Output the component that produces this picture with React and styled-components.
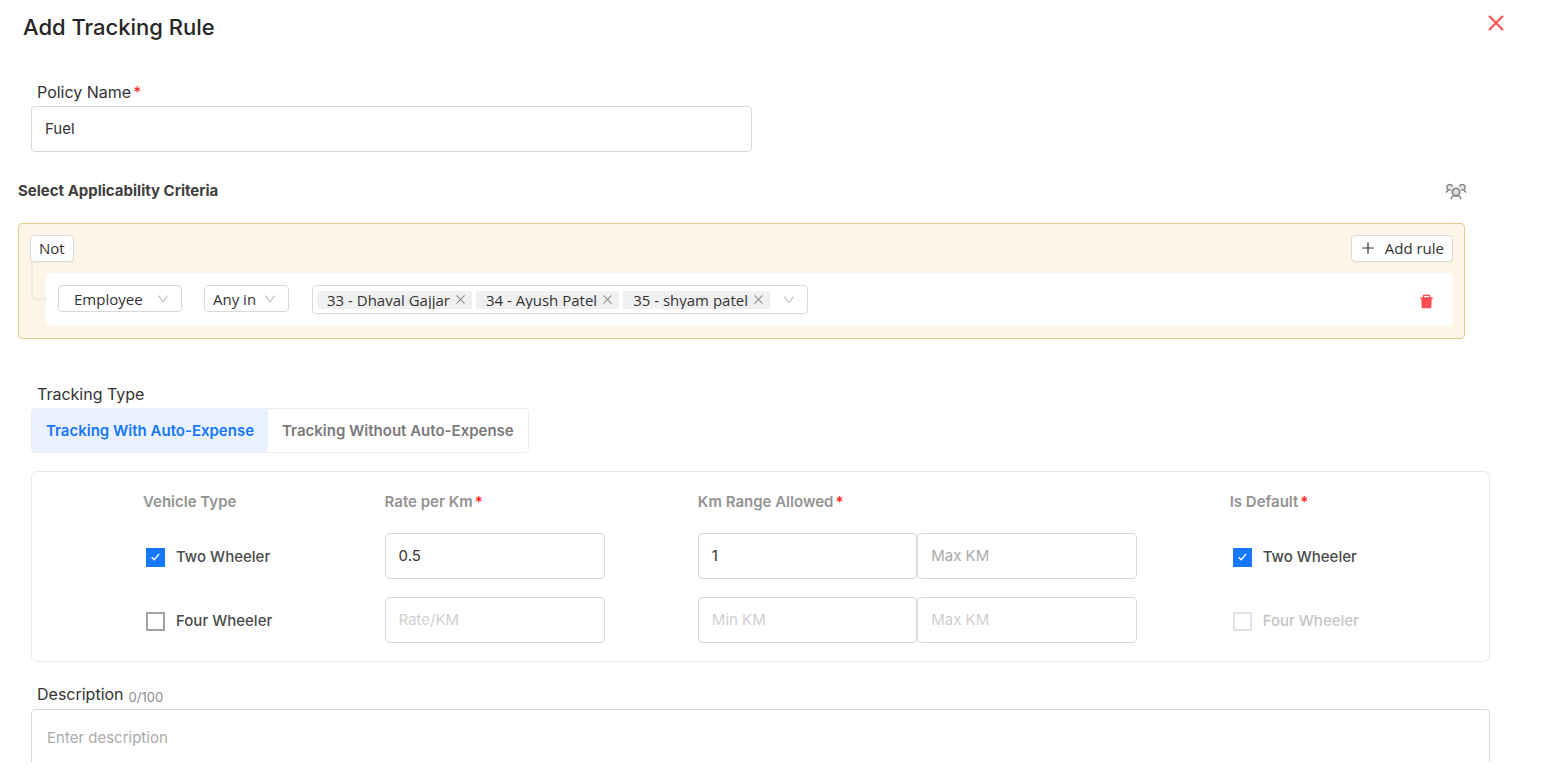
import React, { useState } from "react";
import styled, { createGlobalStyle } from "styled-components";
import {
  AiFillDelete,
  AiOutlineClose,
  AiOutlineDown,
  AiOutlinePlus,
} from "react-icons/ai";

const GlobalStyle = createGlobalStyle`
  *,
  *::before,
  *::after {
    box-sizing: border-box;
  }

  body {
    margin: 0;
    background-color: #fff;
    color: #333;
    font-family: Inter, "Liberation Sans", sans-serif;
    font-size: 16px;
    line-height: 24px;
  }

  button,
  input,
  select,
  textarea {
    font-family: inherit;
    font-size: inherit;
    line-height: inherit;
    color: inherit;
  }
`;

const Drawer = styled.main`
  display: flex;
  flex-direction: column;
  height: 100vh;
  padding-bottom: 9px;
`;

const Header = styled.header`
  display: flex;
  justify-content: space-between;
  align-items: flex-start;
  padding: 12px 37px 0 23px;
`;

const Title = styled.h1`
  margin: 0;
  font-size: 22px;
  font-weight: 500;
  line-height: 30px;
  color: #262626;
`;

const IconButton = styled.button`
  display: flex;
  padding: 0;
  border: none;
  background: none;
  color: ${({ $color }) => $color};
  font-size: ${({ $size }) => $size}px;
  cursor: pointer;
`;

const CloseButton = styled(IconButton)`
  svg {
    stroke: currentColor;
    stroke-width: 24;
  }
`;

const Content = styled.form`
  flex: 1;
  min-height: 0;
  padding: 38px 54px 0 31px;
  overflow: hidden;
`;

const Label = styled.label`
  display: block;
  margin-bottom: 2px;
  padding-left: 6px;
  font-size: 16px;
`;

const Required = styled.span`
  margin-left: 2px;
  color: #ff1f1f;
`;

const Counter = styled.small`
  position: relative;
  top: 2px;
  margin-left: 5px;
  font-size: 13px;
  color: #8c8c8c;
`;

const TextInput = styled.input`
  display: block;
  width: 100%;
  height: 46px;
  padding: 0 13px 2px;
  border: 1px solid #d9d9d9;
  border-radius: 4px;
  background-color: #fff;
  font-size: 15px;

  &::placeholder {
    color: ${({ disabled }) => (disabled ? "#d0d0d0" : "#ababab")};
    opacity: 1;
  }
`;

const Half = styled.div`
  display: grid;
  grid-template-columns: 1fr 1fr;
  column-gap: 18px;
`;

const Criteria = styled.section`
  margin: 26px -29px 43px -13px;
  padding-right: 54px;
`;

const CriteriaHead = styled.div`
  display: flex;
  justify-content: space-between;
  align-items: center;
  margin: 0 -2px 20px 0;
  padding-top: 1px;
`;

const CriteriaTitle = styled.h2`
  margin: 0;
  font-size: 15px;
  font-weight: 700;
  line-height: 24px;
  color: #404040;
`;

const RuleGroup = styled.div`
  padding: 11px 11px 12px;
  border: 1px solid #e0cc8f;
  border-radius: 4px;
  background-color: #fdf6e8;
  font-family: "Open Sans", "Noto Sans", sans-serif;
  font-size: 15px;
`;

const RuleGroupHead = styled.div`
  display: flex;
  justify-content: space-between;
`;

const SmallButton = styled.button`
  display: flex;
  align-items: center;
  gap: 9px;
  height: 27px;
  padding: 0 8px 1px;
  border: 1px solid #d9d9d9;
  border-radius: 4px;
  background-color: #fff;
  box-shadow: 0 1px 1px #0000000a;
  cursor: pointer;
`;

const RuleGroupBody = styled.div`
  display: flex;
  padding-left: 1px;
`;

const Connector = styled.div`
  flex: none;
  width: 15px;
  height: 38px;
  border: solid #efe9dc;
  border-width: 0 0 2px 2px;
  border-bottom-left-radius: 4px;
`;

const Rule = styled.div`
  flex: 1;
  display: flex;
  align-items: flex-start;
  margin-top: 11px;
  height: 53px;
  padding: 12px 18px 0 12px;
  border-radius: 5px;
  background-color: #fff;
`;

const SelectBox = styled.div`
  display: grid;
  align-items: center;
  margin-right: ${({ $gap }) => $gap}px;

  & > * {
    grid-area: 1 / 1;
  }
`;

const Select = styled.select`
  appearance: none;
  width: ${({ $width }) => $width}px;
  height: 27px;
  padding: 0 ${({ $pad }) => $pad}px;
  border: 1px solid #d9d9d9;
  border-radius: 4px;
  background-color: #fff;
`;

const Arrow = styled(AiOutlineDown)`
  justify-self: end;
  margin-right: ${({ $right }) => $right || 0}px;
  font-size: 14px;
  color: #bfbfbf;
  pointer-events: none;
`;

const TagBox = styled.div`
  display: flex;
  align-items: center;
  gap: 4px;
  height: 29px;
  padding: 0 11px 0 4px;
  border: 1px solid #d9d9d9;
  border-radius: 4px;
`;

const Tag = styled.span`
  display: flex;
  align-items: center;
  gap: 4px;
  height: 18px;
  padding: 0 5px 0 10px;
  border-radius: 2px;
  background-color: #f0f0f0;
  line-height: 18px;
  overflow: hidden;
`;

const TagArrow = styled(Arrow)`
  margin-left: 8px;
`;

const DeleteButton = styled(IconButton)`
  margin: 8px 0 0 auto;
`;

const Tabs = styled.div`
  display: inline-flex;
  height: 45px;
  margin-bottom: 18px;
  border: 1px solid #ededed;
  border-radius: 4px;
  overflow: hidden;
  vertical-align: top;
`;

const Tab = styled.button`
  padding: 0 14px;
  border: none;
  background-color: ${({ $active }) => ($active ? "#ebf2ff" : "#fff")};
  color: ${({ $active }) => ($active ? "#1677ff" : "#7a7a7a")};
  font-size: 15px;
  font-weight: 600;
  cursor: pointer;
`;

const TableBox = styled.div`
  margin-bottom: 20px;
  border: 1px solid #e8e8ec;
  border-radius: 6px;
`;

const Table = styled.table`
  width: 100%;
  border-spacing: 0;
  table-layout: fixed;
  font-size: 15px;
`;

const Th = styled.th`
  width: ${({ $width }) => $width};
  padding: 18px 0 19px ${({ $indent }) => $indent || 0}px;
  text-align: left;
  font-weight: 600;
  color: #949494;
`;

const Td = styled.td`
  padding: 0 ${({ $right }) => $right || 0}px 18px
    ${({ $indent }) => $indent || 0}px;
`;

const Range = styled.div`
  display: grid;
  grid-template-columns: 1fr 1fr;
`;

const CheckLabel = styled.label`
  display: flex;
  align-items: center;
  gap: 11px;
  padding: 2px 0 0 3px;
  font-weight: 500;
  color: ${({ $disabled }) => ($disabled ? "#c4c4c4" : "#4a4a4a")};
`;

const CheckBox = styled.span`
  display: grid;
  place-items: center;

  & > * {
    grid-area: 1 / 1;
  }
`;

const CheckInput = styled.input`
  appearance: none;
  width: 19px;
  height: 19px;
  margin: 0;
  border: 2px solid #a3a3a3;
  background-color: #fff;

  &:checked {
    border-color: #1677ff;
    background-color: #1677ff;
  }

  &:disabled {
    border-color: #e2e2e2;
  }
`;

const TextArea = styled.textarea`
  display: block;
  width: 100%;
  height: 100px;
  padding: 16px 15px;
  border: 1px solid #d9d9d9;
  border-radius: 4px;
  font-size: 15px;
  resize: none;

  &::placeholder {
    color: #ababab;
    opacity: 1;
  }
`;

const TeamIcon = () => (
  <svg width="22" height="17" viewBox="0 0 22 17" fill="none" stroke="#7d7d7d">
    <path
      d="M7.6 3.8a2.9 2.9 0 1 0-4.3 3.1h2.9M3.3 6.9L.8 9.6"
      fill="#e4e4e4"
      strokeWidth="1.4"
    />
    <path
      d="M14.4 3.8a2.9 2.9 0 1 1 4.3 3.1h-2.9M18.7 6.9l2.5 2.7"
      fill="#e4e4e4"
      strokeWidth="1.4"
    />
    <circle cx="11" cy="9" r="3.7" fill="#dedede" strokeWidth="1.5" />
    <path
      d="M5.8 16.2c.4-1.9 1.5-3 3-3.5h4.4c1.5.5 2.6 1.6 3 3.5"
      strokeWidth="1.4"
    />
  </svg>
);

const Checkbox = ({ label, checked, disabled, onChange }) => (
  <CheckLabel $disabled={disabled}>
    <CheckBox>
      <CheckInput
        type="checkbox"
        checked={checked}
        disabled={disabled}
        onChange={onChange}
      />
      {checked && (
        <svg width="9" height="8" viewBox="0 0 9 8" fill="none">
          <path d="M.7 4.2l2.5 2.5L8.2.9" stroke="#fff" strokeWidth="1.4" />
        </svg>
      )}
    </CheckBox>
    {label}
  </CheckLabel>
);

const employees = ["33 - Dhaval Gajjar", "34 - Ayush Patel", "35 - shyam patel"];

const trackingTypes = [
  "Tracking With Auto-Expense",
  "Tracking Without Auto-Expense",
];

const vehicles = [
  { name: "Two Wheeler", enabled: true, rate: "0.5", min: "1" },
  { name: "Four Wheeler", enabled: false, rate: "", min: "" },
];

const App = () => {
  const [type, setType] = useState(trackingTypes[0]);
  const [rows, setRows] = useState(vehicles);
  const [defaultVehicle, setDefaultVehicle] = useState("Two Wheeler");
  const [description, setDescription] = useState("");

  const toggleRow = (name) =>
    setRows(
      rows.map((row) =>
        row.name === name ? { ...row, enabled: !row.enabled } : row
      )
    );

  return (
    <>
      <GlobalStyle />
      <Drawer>
        <Header>
          <Title>Add Tracking Rule</Title>
          <CloseButton type="button" aria-label="Close" $color="#ff4d4f" $size={22}>
            <AiOutlineClose />
          </CloseButton>
        </Header>

        <Content>
          <Half>
            <div>
              <Label htmlFor="policy">
                Policy Name<Required>*</Required>
              </Label>
              <TextInput id="policy" defaultValue="Fuel" />
            </div>
          </Half>

          <Criteria>
            <CriteriaHead>
              <CriteriaTitle>Select Applicability Criteria</CriteriaTitle>
              <IconButton type="button" aria-label="Show employees">
                <TeamIcon />
              </IconButton>
            </CriteriaHead>

            <RuleGroup>
              <RuleGroupHead>
                <SmallButton type="button">Not</SmallButton>
                <SmallButton type="button">
                  <AiOutlinePlus size={16} />
                  Add rule
                </SmallButton>
              </RuleGroupHead>
              <RuleGroupBody>
                <Connector />
                <Rule>
                  <SelectBox $gap={22}>
                    <Select aria-label="Field" $width={124} $pad={15}>
                      <option>Employee</option>
                    </Select>
                    <Arrow $right={12} />
                  </SelectBox>
                  <SelectBox $gap={23}>
                    <Select aria-label="Operator" $width={85} $pad={8}>
                      <option>Any in</option>
                    </Select>
                    <Arrow $right={12} />
                  </SelectBox>
                  <TagBox>
                    {employees.map((employee) => (
                      <Tag key={employee}>
                        {employee}
                        <IconButton
                          type="button"
                          aria-label={`Remove ${employee}`}
                          $color="#8c8c8c"
                          $size={13}
                        >
                          <AiOutlineClose />
                        </IconButton>
                      </Tag>
                    ))}
                    <TagArrow />
                  </TagBox>
                  <DeleteButton
                    type="button"
                    aria-label="Delete rule"
                    $color="#ff4d4f"
                    $size={17}
                  >
                    <AiFillDelete />
                  </DeleteButton>
                </Rule>
              </RuleGroupBody>
            </RuleGroup>
          </Criteria>

          <Label as="div">Tracking Type</Label>
          <Tabs>
            {trackingTypes.map((item) => (
              <Tab
                key={item}
                type="button"
                $active={item === type}
                onClick={() => setType(item)}
              >
                {item}
              </Tab>
            ))}
          </Tabs>

          <TableBox>
            <Table>
              <thead>
                <tr>
                  <Th $width="24.2%" $indent={111}>
                    Vehicle Type
                  </Th>
                  <Th $width="21.5%">
                    Rate per Km<Required>*</Required>
                  </Th>
                  <Th $width="36.5%">
                    Km Range Allowed<Required>*</Required>
                  </Th>
                  <Th>
                    Is Default<Required>*</Required>
                  </Th>
                </tr>
              </thead>
              <tbody>
                {rows.map(({ name, enabled, rate, min }) => (
                  <tr key={name}>
                    <Td $indent={111}>
                      <Checkbox
                        label={name}
                        checked={enabled}
                        onChange={() => toggleRow(name)}
                      />
                    </Td>
                    <Td $right={93}>
                      <TextInput
                        aria-label={`${name} rate`}
                        placeholder="Rate/KM"
                        defaultValue={rate}
                        disabled={!enabled}
                      />
                    </Td>
                    <Td $right={93}>
                      <Range>
                        <TextInput
                          aria-label={`${name} min`}
                          placeholder="Min KM"
                          defaultValue={min}
                          disabled={!enabled}
                        />
                        <TextInput
                          aria-label={`${name} max`}
                          placeholder="Max KM"
                          disabled={!enabled}
                        />
                      </Range>
                    </Td>
                    <Td>
                      <Checkbox
                        label={name}
                        checked={name === defaultVehicle}
                        disabled={!enabled}
                        onChange={() => setDefaultVehicle(name)}
                      />
                    </Td>
                  </tr>
                ))}
              </tbody>
            </Table>
          </TableBox>

          <Label htmlFor="description">
            Description<Counter>{description.length}/100</Counter>
          </Label>
          <TextArea
            id="description"
            placeholder="Enter description"
            maxLength={100}
            value={description}
            onChange={(e) => setDescription(e.target.value)}
          />
        </Content>
      </Drawer>
    </>
  );
};

export default App;
